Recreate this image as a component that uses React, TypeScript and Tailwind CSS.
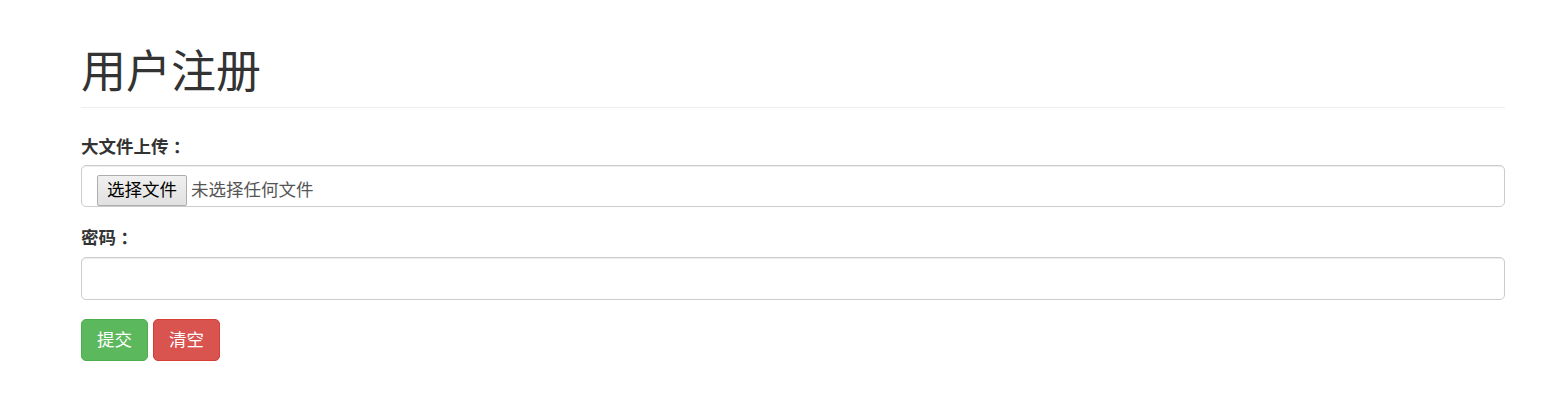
import React from "react";

const colon = { fontFamily: '"Noto Sans CJK TC", sans-serif' };

export default function App() {
  return (
    <div
      className="min-h-[405px] bg-white text-[#333]"
      style={{ fontFamily: '"Liberation Sans", "Noto Sans CJK SC", sans-serif' }}
    >
      <div className="w-[1424px] ml-[81px]">
        {/* page header */}
        <div className="pt-[48px] pb-[10px] border-b border-[#eee]">
          <h1 className="text-[45px] leading-[49px] font-normal text-[#333]">用户注册</h1>
        </div>

        <form className="mt-[27px]">
          <div className="mb-[19px]">
            <label className="flex items-center h-[25px] text-[17.5px] font-bold mb-[5px]">
              大文件上传<span style={colon}>：</span>
            </label>
            <div className="h-[42px] border border-[#ccc] rounded-[5px] px-[15px] flex items-center shadow-[inset_0_1px_1px_rgba(0,0,0,0.075)]">
              <span className="mt-[9px] h-[31px] w-[90px] flex items-center justify-center border border-[#adadad] rounded-[2px] bg-gradient-to-b from-[#f0f0f0] to-[#e1e1e1] text-[17.5px] text-black">
                选择文件
              </span>
              <span className="ml-[4px] mt-[9px] text-[17.5px] text-[#555]">未选择任何文件</span>
            </div>
          </div>

          <div className="mb-[19px]">
            <label className="flex items-center h-[25px] text-[17.5px] font-bold mb-[6px]">
              密码<span style={colon}>：</span>
            </label>
            <input
              type="password"
              className="block w-full h-[43px] border border-[#ccc] rounded-[5px] px-[15px] outline-none shadow-[inset_0_1px_1px_rgba(0,0,0,0.075)]"
            />
          </div>

          <div className="flex gap-[5px]">
            <button
              type="button"
              className="h-[42px] w-[67px] rounded-[5px] bg-[#5cb85c] border border-[#4cae4c] text-white text-[17.5px]"
            >
              提交
            </button>
            <button
              type="button"
              className="h-[42px] w-[67px] rounded-[5px] bg-[#d9534f] border border-[#d43f3a] text-white text-[17.5px]"
            >
              清空
            </button>
          </div>
        </form>
      </div>
    </div>
  );
}
